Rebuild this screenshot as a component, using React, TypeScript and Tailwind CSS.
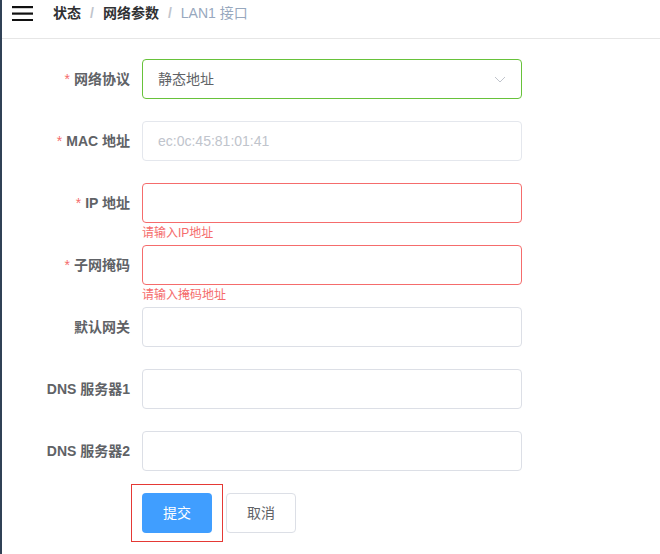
import React from "react";

const F = { fontFamily: '"Liberation Sans", "Noto Sans CJK SC", sans-serif' };

function Row({ label, req, children, err }: { label: string; req?: boolean; children: React.ReactNode; err?: string }) {
  return (
    <div className="flex h-[62px]">
      <div className="w-[140px] pr-3 h-10 flex items-center justify-end text-[14px] font-bold text-[#606266]">
        {req && <span className="text-[#f56c6c] mr-1 font-normal">*</span>}
        {label}
      </div>
      <div className="relative">
        {children}
        {err && <div className="absolute left-0 top-[44px] text-[12px] leading-none text-[#f56c6c]">{err}</div>}
      </div>
    </div>
  );
}

const Input = ({ cls = "border-[#dcdfe6]", children }: { cls?: string; children?: React.ReactNode }) => (
  <div className={`w-[380px] h-10 rounded border bg-white px-[15px] flex items-center text-[14px] ${cls}`}>{children}</div>
);

export default function App() {
  return (
    <div style={F} className="w-[660px] h-[554px] bg-white flex overflow-hidden">
      <div className="w-[2px] bg-[#304156]" />
      <div className="flex-1">
        <div className="h-[39px] border-b border-[#e6e6e6] flex items-center">
          <svg width="22" height="16" viewBox="0 0 22 16" className="ml-[10px] mb-[12px]">
            <rect x="0" y="1" width="21" height="2.2" fill="#111" />
            <rect x="0" y="7.5" width="21" height="2.2" fill="#111" />
            <rect x="0" y="14" width="21" height="2.2" fill="#111" />
          </svg>
          <div className="ml-[19px] mb-[12px] text-[14px] flex items-center">
            <span className="font-bold text-[#303133]">状态</span>
            <span className="mx-[9px] text-[#c0c4cc] font-bold">/</span>
            <span className="font-bold text-[#303133]">网络参数</span>
            <span className="mx-[9px] text-[#c0c4cc] font-bold">/</span>
            <span className="text-[#97a8be]">LAN1 接口</span>
          </div>
        </div>
        <div className="pt-[20px]">
          <Row label="网络协议" req>
            <Input cls="border-[#67c23a] justify-between">
              <span className="text-[#606266]">静态地址</span>
              <svg width="12" height="7" viewBox="0 0 12 7"><path d="M1 1l5 5 5-5" fill="none" stroke="#c0c4cc" strokeWidth="1" /></svg>
            </Input>
          </Row>
          <Row label="MAC 地址" req>
            <Input cls="border-[#e4e7ed] bg-[#f5f7fa] text-[#c0c4cc]">ec:0c:45:81:01:41</Input>
          </Row>
          <Row label="IP 地址" req err="请输入IP地址"><Input cls="border-[#f56c6c]" /></Row>
          <Row label="子网掩码" req err="请输入掩码地址"><Input cls="border-[#f56c6c]" /></Row>
          <Row label="默认网关"><Input /></Row>
          <Row label="DNS 服务器1"><Input /></Row>
          <Row label="DNS 服务器2"><Input /></Row>
          <div className="flex ml-[129px] -mt-[9px]">
            <div className="border border-[#e53935] px-[10px] py-[8px]">
              <button className="w-[70px] h-10 rounded bg-[#409eff] text-white text-[14px]">提交</button>
            </div>
            <button className="ml-[3px] mt-[9px] w-[70px] h-10 rounded border border-[#dcdfe6] bg-white text-[#606266] text-[14px]">取消</button>
          </div>
        </div>
      </div>
    </div>
  );
}
